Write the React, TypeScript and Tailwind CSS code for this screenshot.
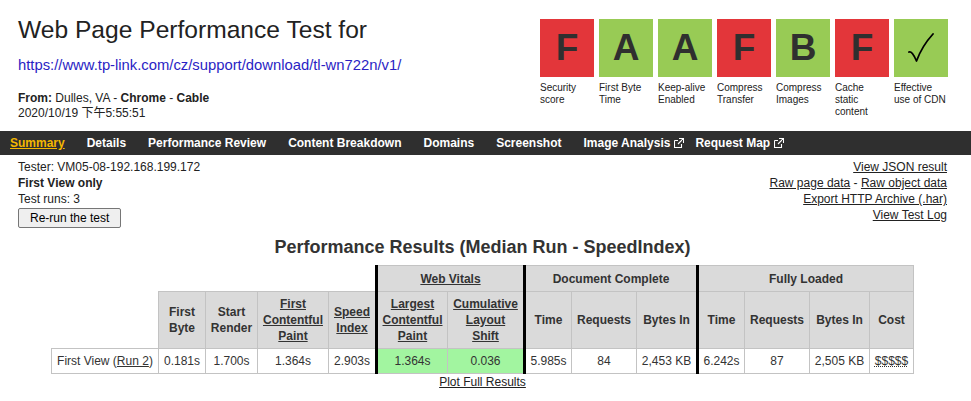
import React from 'react'

const grades = [
  { grade: 'F', label: 'Security score', bad: true },
  { grade: 'A', label: 'First Byte Time', bad: false },
  { grade: 'A', label: 'Keep-alive Enabled', bad: false },
  { grade: 'F', label: 'Compress Transfer', bad: true },
  { grade: 'B', label: 'Compress Images', bad: false },
  { grade: 'F', label: 'Cache static content', bad: true },
  { grade: 'check', label: 'Effective use of CDN', bad: false },
]

const tabs = [
  { label: 'Summary', cls: 'ml-[10px]' },
  { label: 'Details', cls: 'ml-[22px]' },
  { label: 'Performance Review', cls: 'ml-[22px]' },
  { label: 'Content Breakdown', cls: 'ml-[22px]' },
  { label: 'Domains', cls: 'ml-[22px]' },
  { label: 'Screenshot', cls: 'ml-[22px]' },
  { label: 'Image Analysis', cls: 'ml-[22px]', ext: true },
  { label: 'Request Map', cls: 'ml-[11px]', ext: true },
]

function ExtIcon() {
  return (
    <svg width="10" height="10" viewBox="0 0 10 10" className="ml-[4px]" fill="none" stroke="white" strokeWidth="1.1">
      <path d="M0.5 2.5h3.5M0.5 2.5v7h7v-3.5" />
      <path d="M5 0.5h4.5v4.5M9.5 0.5L4 6" />
    </svg>
  )
}

function Check() {
  return (
    <svg width="26" height="30" viewBox="0 0 26 30" fill="none">
      <path d="M1 19 Q4 17.5 8.5 28 Q14 13 25 1" stroke="black" strokeWidth="1.8" strokeLinecap="round" strokeLinejoin="round" />
    </svg>
  )
}

const th = 'border border-[#c3c3c3] bg-[#dadada] font-bold text-[12px] leading-[16px] text-[#333] px-[4px] text-center'
const td = 'border border-[#c3c3c3] text-[12px] text-[#333] px-[4px] text-center'
const thick = 'border-l-[3px] border-l-black'

export default function App() {
  return (
    <div className="w-[971px] min-h-[401px] bg-white font-['Liberation_Sans',Arial,'Noto_Sans_CJK_TC',sans-serif] text-[#222]">
      <header className="flex justify-between items-start pl-[18px] pr-[23px]">
        <div className="pt-[15px]">
          <h1 className="text-[24.6px] leading-[29px] font-normal text-[#222]">Web Page Performance Test for</h1>
          <a className="block mt-[12px] text-[14.8px] leading-[18px] text-[#2a1ec4]">https://www.tp-link.com/cz/support/download/tl-wn722n/v1/</a>
          <div className="mt-[17px] text-[12px] leading-[15px] text-[#222]">
            <div>
              <b>From:</b> Dulles, VA - <b>Chrome</b> - <b>Cable</b>
            </div>
            <div>2020/10/19 下午5:55:51</div>
          </div>
        </div>
        <div className="flex gap-[5px] pt-[19px] pb-[13px]">
          {grades.map((g) => (
            <div key={g.label} className="w-[54px]">
              <div
                className={`h-[58px] flex items-center justify-center font-bold text-[37px] text-[#2f2f2f] ${
                  g.bad ? 'bg-[#e3363a]' : 'bg-[#98cb55]'
                }`}
              >
                {g.grade === 'check' ? <Check /> : g.grade}
              </div>
              <div className="mt-[5px] text-[10px] leading-[12px] text-[#222]">{g.label}</div>
            </div>
          ))}
        </div>
      </header>

      <nav className="h-[24px] bg-[#2f2f2f] flex items-center">
        {tabs.map((t, i) => (
          <span
            key={t.label}
            className={`${t.cls} flex items-center font-bold text-[12px] ${
              i === 0 ? 'text-[#f4b800] underline' : 'text-white'
            }`}
          >
            {t.label}
            {t.ext && <ExtIcon />}
          </span>
        ))}
      </nav>

      <div className="pl-[18px] pr-[24px]">
        <div className="flex justify-between mt-[4px] text-[12px] leading-[16px]">
          <div>
            <div>Tester: VM05-08-192.168.199.172</div>
            <div className="font-bold">First View only</div>
            <div>Test runs: 3</div>
            <button className="mt-[1px] h-[20px] px-[11px] border border-[#767676] rounded-[2px] bg-[#efefef] text-[12px] leading-[16px] text-black">
              Re-run the test
            </button>
          </div>
          <div className="text-right">
            <div><a className="underline">View JSON result</a></div>
            <div>
              <a className="underline">Raw page data</a> - <a className="underline">Raw object data</a>
            </div>
            <div><a className="underline">Export HTTP Archive (.har)</a></div>
            <div><a className="underline">View Test Log</a></div>
          </div>
        </div>

        <h2 className="mt-[8px] text-center text-[18px] leading-[22px] font-bold text-[#333]">
          Performance Results (Median Run - SpeedIndex)
        </h2>

        <table className="mx-auto mt-[7px] w-[862px] table-fixed border-collapse">
          <colgroup>
            <col className="w-[107px]" />
            <col className="w-[47px]" />
            <col className="w-[52px]" />
            <col className="w-[71px]" />
            <col className="w-[48px]" />
            <col className="w-[71px]" />
            <col className="w-[77px]" />
            <col className="w-[47px]" />
            <col className="w-[65px]" />
            <col className="w-[61px]" />
            <col className="w-[47px]" />
            <col className="w-[65px]" />
            <col className="w-[60px]" />
            <col className="w-[44px]" />
          </colgroup>
          <thead>
            <tr className="h-[26px]">
              <th colSpan={5}></th>
              <th colSpan={2} className={`${th} ${thick}`}>
                <a className="underline">Web Vitals</a>
              </th>
              <th colSpan={3} className={`${th} ${thick}`}>Document Complete</th>
              <th colSpan={4} className={`${th} ${thick}`}>Fully Loaded</th>
            </tr>
            <tr className="h-[57px]">
              <th></th>
              <th className={th}>First Byte</th>
              <th className={th}>Start Render</th>
              <th className={th}><a className="underline">First Contentful Paint</a></th>
              <th className={th}><a className="underline">Speed Index</a></th>
              <th className={`${th} ${thick}`}><a className="underline">Largest Contentful Paint</a></th>
              <th className={th}><a className="underline">Cumulative Layout Shift</a></th>
              <th className={`${th} ${thick}`}>Time</th>
              <th className={th}>Requests</th>
              <th className={th}>Bytes In</th>
              <th className={`${th} ${thick}`}>Time</th>
              <th className={th}>Requests</th>
              <th className={th}>Bytes In</th>
              <th className={th}>Cost</th>
            </tr>
          </thead>
          <tbody>
            <tr className="h-[25px]">
              <td className={td}>
                First View (<a className="underline">Run 2</a>)
              </td>
              <td className={td}>0.181s</td>
              <td className={td}>1.700s</td>
              <td className={td}>1.364s</td>
              <td className={td}>2.903s</td>
              <td className={`${td} ${thick} bg-[#a2f5a0]`}>1.364s</td>
              <td className={`${td} bg-[#a2f5a0]`}>0.036</td>
              <td className={`${td} ${thick}`}>5.985s</td>
              <td className={td}>84</td>
              <td className={td}>2,453 KB</td>
              <td className={`${td} ${thick}`}>6.242s</td>
              <td className={td}>87</td>
              <td className={td}>2,505 KB</td>
              <td className={td}>
                <span className="underline decoration-dotted">$$$$$</span>
              </td>
            </tr>
          </tbody>
        </table>
        <div className="text-center text-[12px] leading-[16px]">
          <a className="underline">Plot Full Results</a>
        </div>
      </div>
    </div>
  )
}
